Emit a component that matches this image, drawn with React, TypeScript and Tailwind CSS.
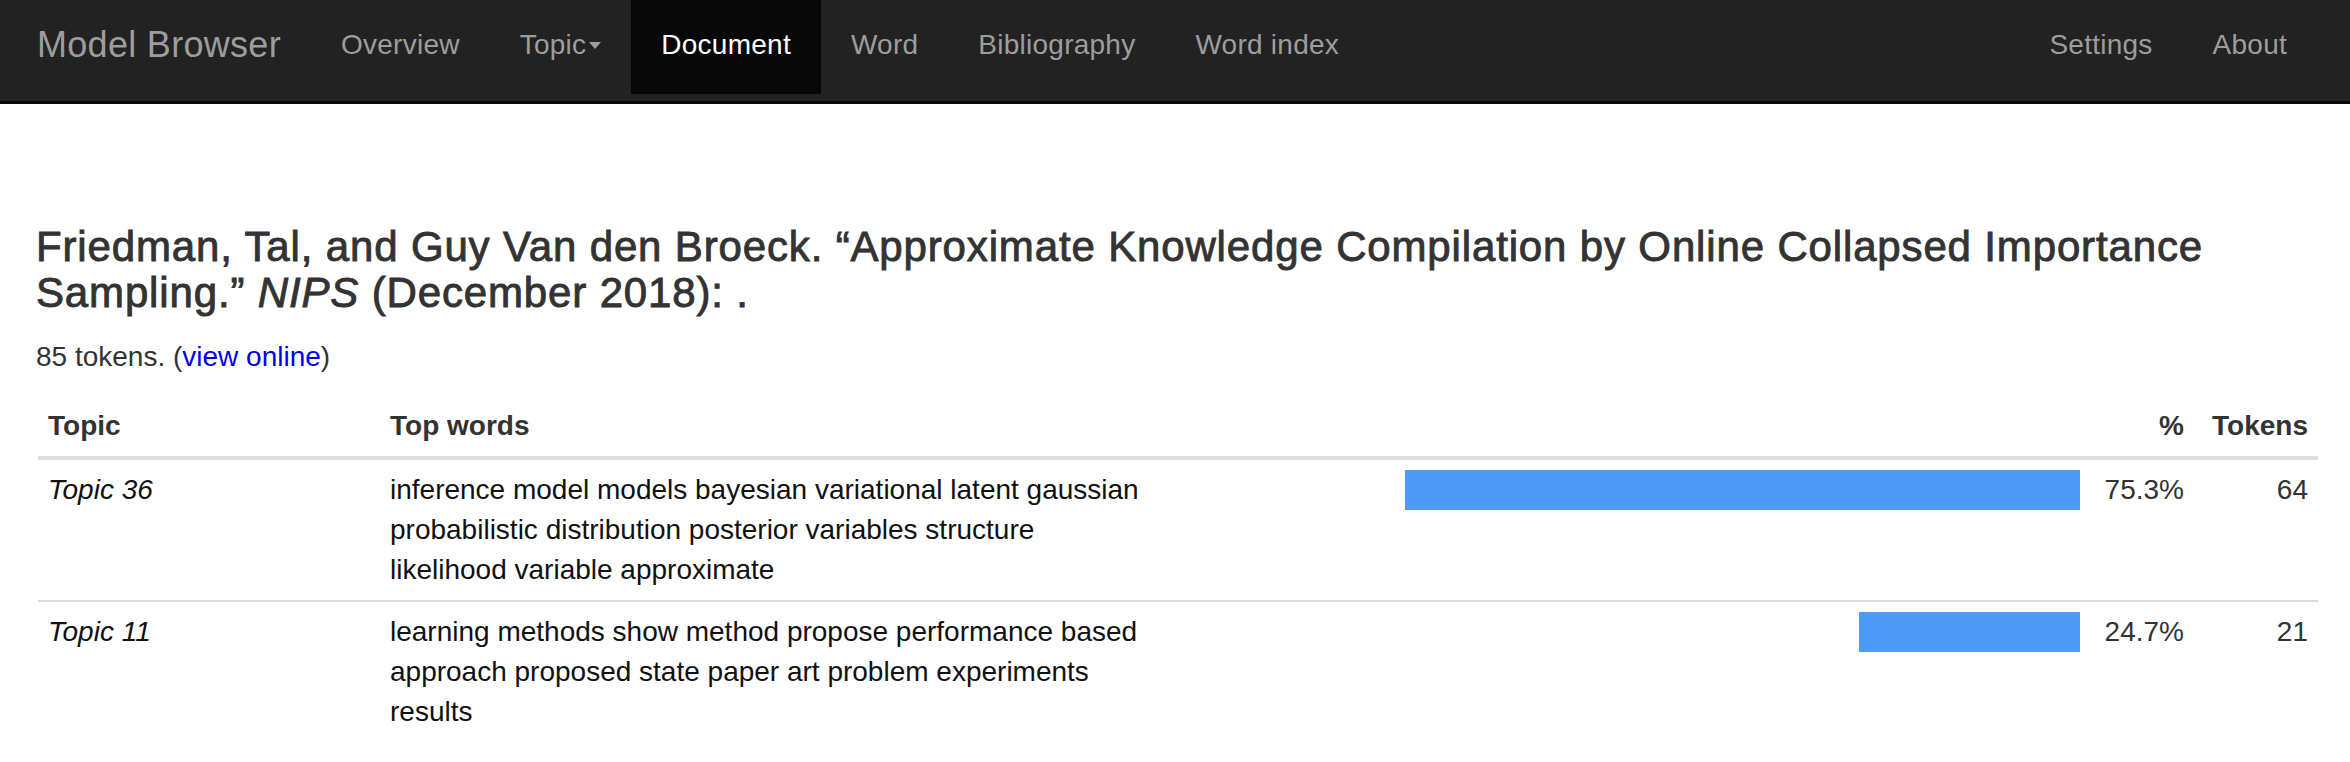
import React from 'react'

interface TopicRow {
  name: string
  words: string
  pct: number
  tokens: number
}

const rows: TopicRow[] = [
  {
    name: 'Topic 36',
    words: 'inference model models bayesian variational latent gaussian probabilistic distribution posterior variables structure likelihood variable approximate',
    pct: 75.3,
    tokens: 64,
  },
  {
    name: 'Topic 11',
    words: 'learning methods show method propose performance based approach proposed state paper art problem experiments results',
    pct: 24.7,
    tokens: 21,
  },
]

const navLinks = ['Overview', 'Topic', 'Document', 'Word', 'Bibliography', 'Word index']

const Navbar: React.FC = () => {
  return (
    <nav className="flex h-[104px] border-b-[3px] border-[#080808] bg-[#222] pl-[37px] pr-[33px]">
      <a className="h-[94px] pr-[30px] pt-[25px] text-[36px] leading-[40px] tracking-[0.3px] text-[#9d9d9d]">Model Browser</a>
      <ul className="flex">
        {navLinks.map((l) => (
          <li
            key={l}
            className={
              l === 'Document'
                ? 'flex h-[94px] items-start bg-[#080808] px-[30px] pt-[25px] text-[28px] leading-[40px] tracking-[0.25px] text-white'
                : 'flex h-[94px] items-start px-[30px] pt-[25px] text-[28px] leading-[40px] tracking-[0.25px] text-[#9d9d9d]'
            }
          >
            {l}
            {l === 'Topic' && (
              <span className="ml-[3px] mt-[17px] inline-block h-0 w-0 border-l-[6px] border-r-[6px] border-t-[7px] border-l-transparent border-r-transparent border-t-[#9d9d9d]" />
            )}
          </li>
        ))}
      </ul>
      <ul className="ml-auto flex">
        <li className="h-[94px] px-[30px] pt-[25px] text-[28px] leading-[40px] tracking-[0.25px] text-[#9d9d9d]">Settings</li>
        <li className="h-[94px] px-[30px] pt-[25px] text-[28px] leading-[40px] tracking-[0.25px] text-[#9d9d9d]">About</li>
      </ul>
    </nav>
  )
}

const App: React.FC = () => {
  return (
    <div className="min-h-screen bg-white font-['Liberation_Sans',Arial,sans-serif] text-[28px] leading-[40px] text-[#333]">
      <Navbar />
      <main className="pl-[36px] pr-[32px]">
        <h3 className="mt-[120px] text-[42px] leading-[46px] tracking-[0.85px] text-[#333] [-webkit-text-stroke:0.9px_#333]">
          Friedman, Tal, and Guy Van den Broeck. “Approximate Knowledge Compilation by Online Collapsed Importance Sampling.” <i>NIPS</i> (December 2018): .
        </h3>
        <p className="mt-[21px]">
          85 tokens. (<a className="text-[#0000ee]">view online</a>)
        </p>

        <div className="ml-[2px] mt-[19px]">
          <div className="grid grid-cols-[342px_775px_1fr_104px_124px] border-b-4 border-[#ddd] font-bold">
            <div className="px-[10px] py-[10px]">Topic</div>
            <div className="px-[10px] py-[10px]">Top words</div>
            <div className="px-[10px] py-[10px]" />
            <div className="px-[10px] py-[10px] text-right">%</div>
            <div className="px-[10px] py-[10px] text-right">Tokens</div>
          </div>
          {rows.map((r, i) => (
            <div
              key={r.name}
              className={
                i < rows.length - 1
                  ? 'grid grid-cols-[342px_775px_1fr_104px_124px] border-b-2 border-[#ddd]'
                  : 'grid grid-cols-[342px_775px_1fr_104px_124px]'
              }
            >
              <div className="px-[10px] py-[10px] italic text-[#111]">{r.name}</div>
              <div className="px-[10px] py-[10px] text-[#111]">{r.words}</div>
              <div className="flex justify-end px-[10px] py-[10px]">
                <div className="flex h-[40px] w-[896px] justify-end">
                  <div className="h-[40px] bg-[#4f99f7]" style={{ width: `${r.pct}%` }} />
                </div>
              </div>
              <div className="px-[10px] py-[10px] text-right">{r.pct.toFixed(1)}%</div>
              <div className="px-[10px] py-[10px] text-right">{r.tokens}</div>
            </div>
          ))}
        </div>
      </main>
    </div>
  )
}

export default App
